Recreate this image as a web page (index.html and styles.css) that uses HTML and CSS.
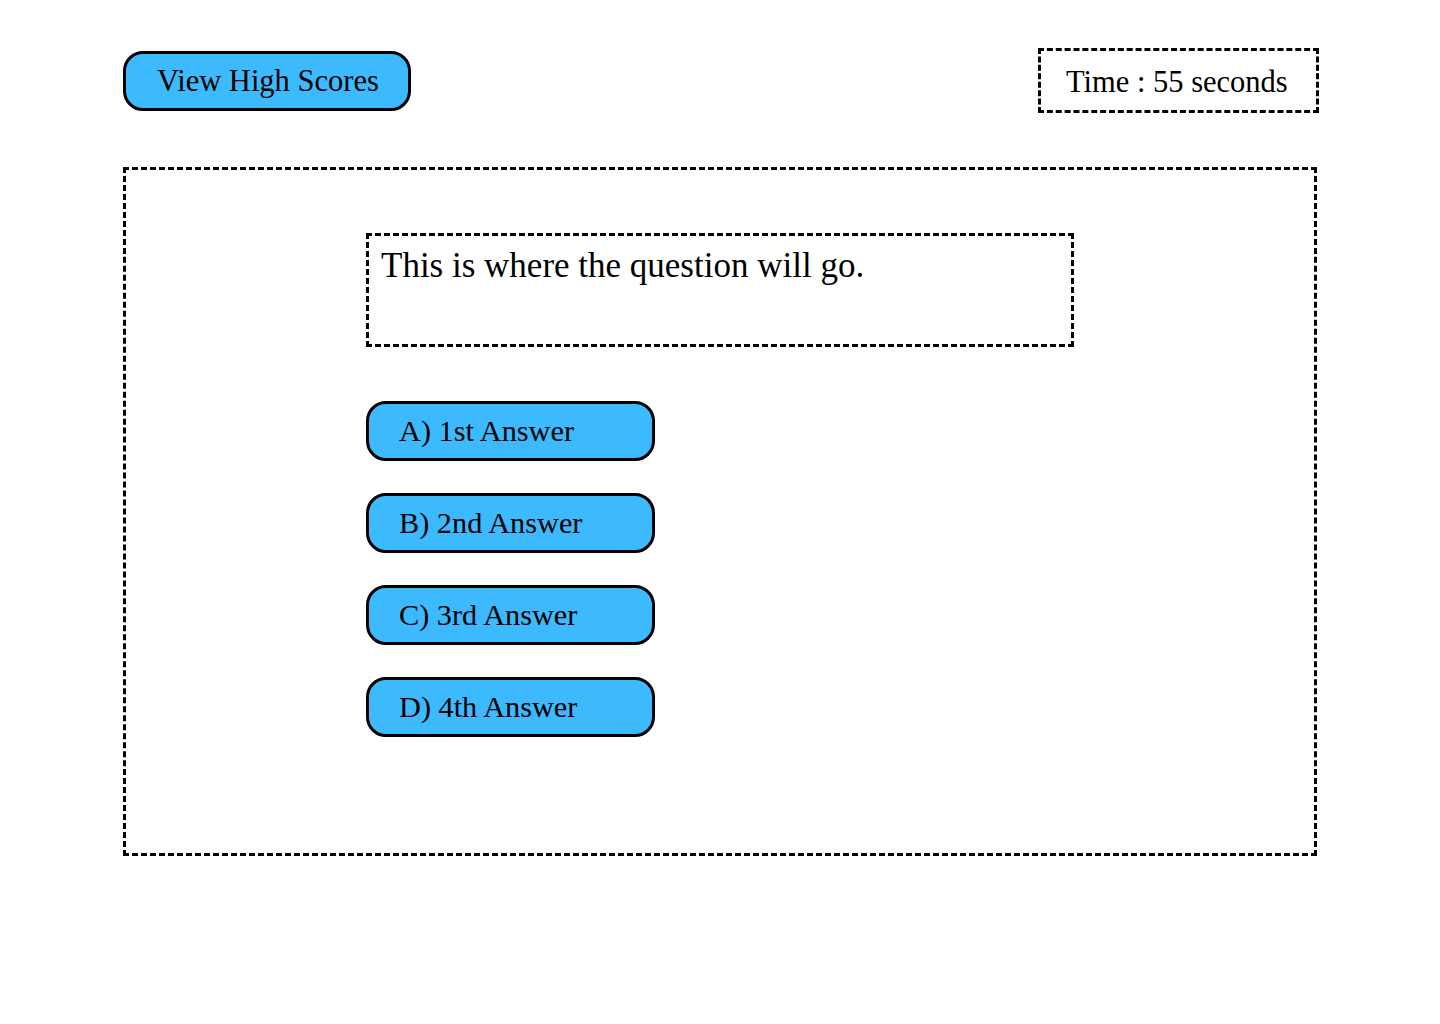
FILE: index.html
```html
<!DOCTYPE html>
<html>
<head>
<meta charset="utf-8">
<title>Quiz</title>
<link rel="stylesheet" href="styles.css">
</head>
<body>
<div class="page">
  <header class="top">
    <button class="btn scores">View High Scores</button>
    <div class="timer">Time : 55 seconds</div>
  </header>
  <main class="quiz">
    <div class="inner">
      <div class="question">This is where the question will go.</div>
      <div class="answers">
        <button class="btn answer">A) 1st Answer</button>
        <button class="btn answer">B) 2nd Answer</button>
        <button class="btn answer">C) 3rd Answer</button>
        <button class="btn answer">D) 4th Answer</button>
      </div>
    </div>
  </main>
</div>
</body>
</html>
```
FILE: styles.css
```css
* { box-sizing: border-box; }
html, body { margin: 0; padding: 0; background: #fff; }
body {
  font-family: "Liberation Serif", "DejaVu Serif", serif;
  color: #000;
}
.page {
  padding: 48px 121px 0 123px;
}
.top {
  display: flex;
  justify-content: space-between;
  align-items: flex-start;
  height: 119px;
}
.btn {
  font-family: inherit;
  color: #000;
  background: #3db9fe;
  border: 3px solid #000;
  border-radius: 20px;
  height: 60px;
  text-align: left;
  cursor: pointer;
  line-height: 1;
}
.scores {
  margin-top: 3px;
  width: 288px;
  font-size: 30.5px;
  padding: 0 0 0 31px;
}
.timer {
  width: 281px;
  height: 65px;
  border: 3px dashed #000;
  font-size: 30.5px;
  display: flex;
  align-items: center;
  justify-content: flex-start;
  padding: 4px 0 0 25px;
}
.quiz {
  width: 1194px;
  height: 689px;
  border: 3px dashed #000;
}
.inner {
  padding: 63px 0 0 240px;
}
.question {
  width: 708px;
  height: 114px;
  border: 3px dashed #000;
  font-size: 35px;
  padding: 12px 0 0 12px;
  line-height: 1;
}
.answers {
  display: flex;
  flex-direction: column;
  gap: 32px;
  margin-top: 54px;
}
.answer {
  width: 289px;
  font-size: 30.3px;
  padding: 0 0 0 30px;
}
```
